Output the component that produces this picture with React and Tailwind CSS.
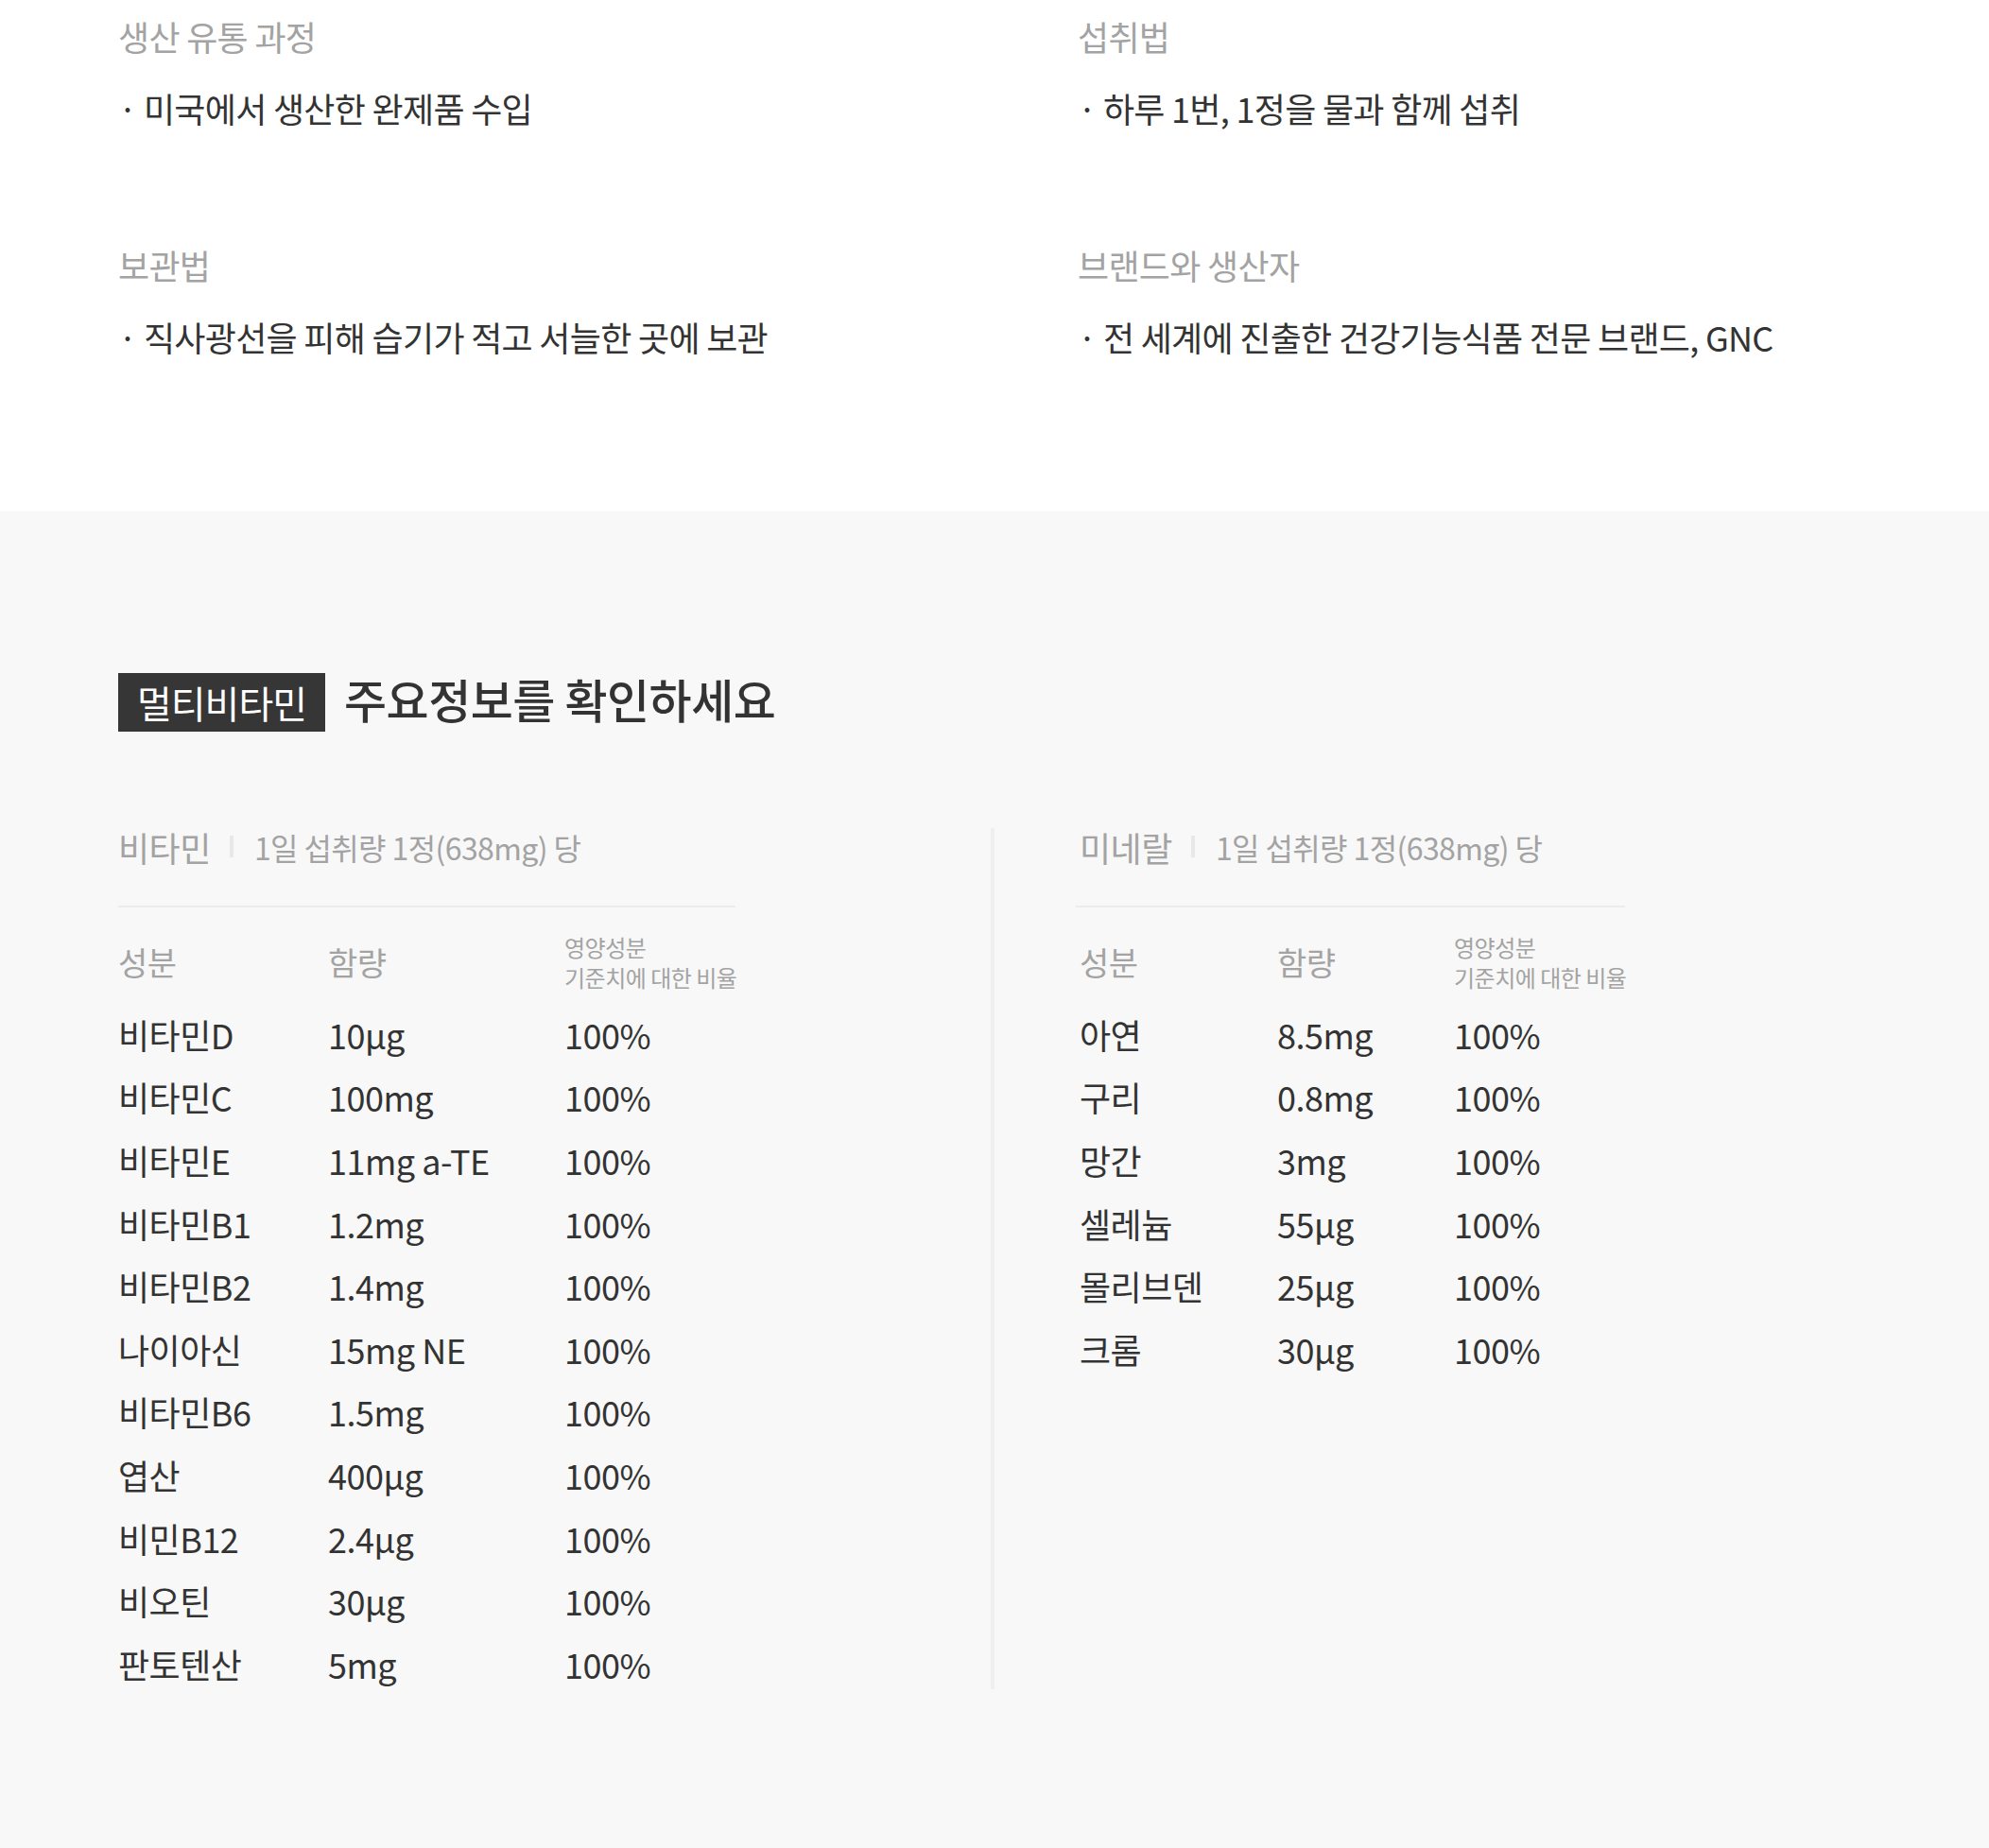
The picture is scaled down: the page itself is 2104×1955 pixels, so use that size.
import React from 'react';

const vitamins = [
  ['비타민D', '10μg'],
  ['비타민C', '100mg'],
  ['비타민E', '11mg a-TE'],
  ['비타민B1', '1.2mg'],
  ['비타민B2', '1.4mg'],
  ['나이아신', '15mg NE'],
  ['비타민B6', '1.5mg'],
  ['엽산', '400μg'],
  ['비민B12', '2.4μg'],
  ['비오틴', '30μg'],
  ['판토텐산', '5mg'],
];

const minerals = [
  ['아연', '8.5mg'],
  ['구리', '0.8mg'],
  ['망간', '3mg'],
  ['셀레늄', '55μg'],
  ['몰리브덴', '25μg'],
  ['크롬', '30μg'],
];

const InfoBlock = ({ title, text }) => (
  <div>
    <h3 className="text-[36px] leading-[48px] tracking-[-0.7px] text-[#a3a3a3]">{title}</h3>
    <p className="mt-[28px] text-[36px] leading-[48px] tracking-[-0.7px] text-[#333]">· {text}</p>
  </div>
);

// one nutrient table (vitamins or minerals)
const NutrientTable = ({ label, rows, width, cols, inset }) => (
  <div className={width}>
    <div className={`flex items-center h-[40px] text-[#a3a3a3] ${inset}`}>
      <span className="text-[36px] tracking-[-0.5px]">{label}</span>
      <span className="w-[4px] h-[23px] bg-[#e8e8e8] ml-[20px] mr-[22px]" />
      <span className="text-[32px] tracking-[-0.6px]">1일 섭취량 1정(638mg) 당</span>
    </div>
    <div className="mt-[42px] h-[2px] bg-[#ececec]" />
    <div className={`grid ${cols} items-center mt-[26px] h-[64px] text-[#a3a3a3] ${inset}`}>
      <span className="text-[34px] tracking-[-0.5px]">성분</span>
      <span className="text-[34px] tracking-[-0.5px]">함량</span>
      <span className="text-[24px] leading-[32px] tracking-[-0.5px] whitespace-nowrap">
        영양성분
        <br />
        기준치에 대한 비율
      </span>
    </div>
    <div className={`mt-[11px] ${inset}`}>
      {rows.map(([name, amount]) => (
        <div key={name} className={`grid ${cols} h-[66.6px] items-center text-[36px] tracking-[-0.5px] text-[#333]`}>
          <span>{name}</span>
          <span>{amount}</span>
          <span>100%</span>
        </div>
      ))}
    </div>
  </div>
);

export default function App() {
  return (
    <div className="w-full font-['Noto_Sans_CJK_KR','Noto_Sans',sans-serif]">
      {/* product info */}
      <section className="bg-white h-[541px] grid grid-cols-2">
        <div className="pl-[125px] pt-[14px] flex flex-col gap-[118px]">
          <InfoBlock title="생산 유통 과정" text="미국에서 생산한 완제품 수입" />
          <InfoBlock title="보관법" text="직사광선을 피해 습기가 적고 서늘한 곳에 보관" />
        </div>
        <div className="pl-[88px] pt-[14px] flex flex-col gap-[118px]">
          <InfoBlock title="섭취법" text="하루 1번, 1정을 물과 함께 섭취" />
          <InfoBlock title="브랜드와 생산자" text="전 세계에 진출한 건강기능식품 전문 브랜드, GNC" />
        </div>
      </section>

      {/* key info */}
      <section className="bg-[#f8f8f8] h-[1414px] pt-[165px]">
        <div className="pl-[125px] flex items-center">
          <span className="bg-[#363636] text-white h-[62px] px-[20px] flex items-center text-[40px] tracking-[-1px]">
            멀티비타민
          </span>
          <h2 className="relative -top-[4px] ml-[20px] text-[49px] font-medium tracking-[-0.5px] text-[#333]">주요정보를 확인하세요</h2>
        </div>

        <div className="grid grid-cols-2 mt-[96px]">
          <div className="h-[911px] border-r-4 border-[#efefef] pl-[125px]">
            <NutrientTable label="비타민" rows={vitamins} width="w-[653px]" cols="grid-cols-[222px_250px_1fr]" inset="" />
          </div>
          <div className="pl-[86px]">
            <NutrientTable label="미네랄" rows={minerals} width="w-[581px]" cols="grid-cols-[209px_187px_1fr]" inset="pl-[4px]" />
          </div>
        </div>
      </section>
    </div>
  );
}
